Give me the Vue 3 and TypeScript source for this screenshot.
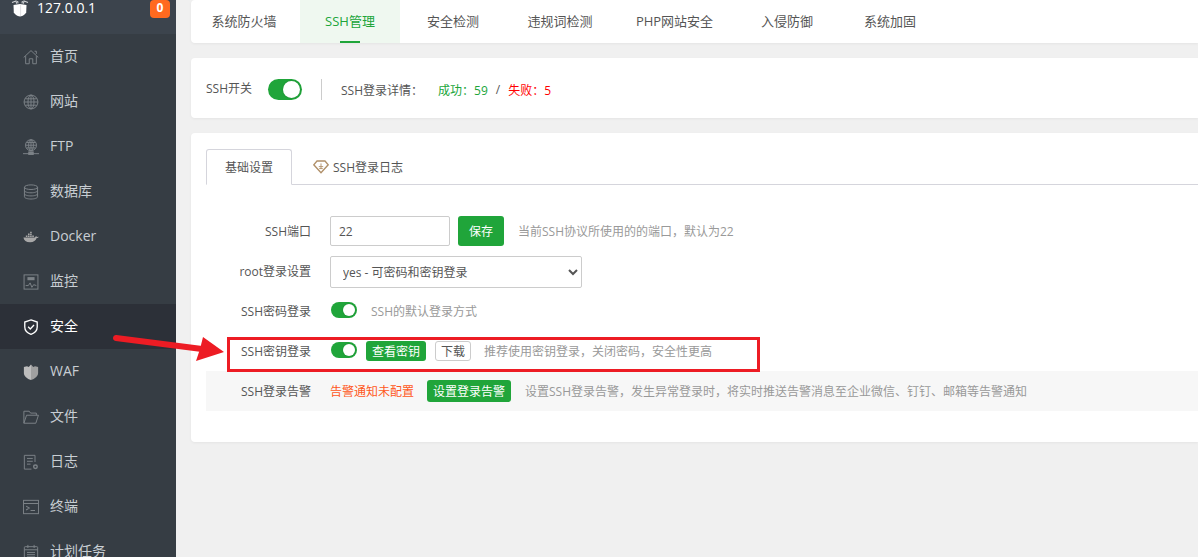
<template>
  <div class="page">
    <aside class="sidebar">
      <div class="brand">
        <svg class="logo" viewBox="0 0 18 18" width="18" height="18">
          <path d="M2.5 5 L9 4 L15.5 5 L15.2 12.5 Q13.8 15.4 9 16.6 Q4.2 15.4 2.8 12.5 Z" fill="#fff" />
          <path d="M1 2.6 L5 1 L5.6 3.6 M6.6 1 L7 3.4 M11.4 1 L11 3.4 M12.4 3.6 L13 1 L17 2.6" stroke="#cfd2d5" stroke-width="1.1" fill="none" />
          <path d="M9.6 4.5 V16" stroke="#d5d7da" stroke-width="0.8" />
        </svg>
        <span class="ip">127.0.0.1</span>
        <span class="badge">0</span>
      </div>
      <nav>
        <div v-for="item in menu" :key="item.name" class="nav-item" :class="{ active: item.active }">
          <svg class="nav-icon" viewBox="0 0 18 18" width="16" height="16" fill="none" stroke="currentColor" stroke-width="1.1">
            <g v-if="item.icon === 'home'">
              <path d="M0.8 9.5 L9 1.8 L17.2 9.5 M3 8 V16.6 H7 V11 H11 V16.6 H15 V8 M13 2.5 H15 V5.5" />
            </g>
            <g v-else-if="item.icon === 'globe'">
              <circle cx="9" cy="9" r="7.8" />
              <ellipse cx="9" cy="9" rx="3.4" ry="7.8" />
              <path d="M1.2 9 H16.8 M2.4 5.4 H15.6 M2.4 12.6 H15.6 M9 1.2 V16.8" />
            </g>
            <g v-else-if="item.icon === 'ftp'">
              <circle cx="9" cy="7" r="6.2" />
              <ellipse cx="9" cy="7" rx="2.7" ry="6.2" />
              <path d="M2.8 7 H15.2 M4 4 H14 M4 10 H14 M9 1 V13 M0 16.5 H18" />
              <rect x="6.5" y="14.5" width="5" height="3" fill="currentColor" />
            </g>
            <g v-else-if="item.icon === 'db'">
              <ellipse cx="9" cy="3.6" rx="7.4" ry="2.6" />
              <path d="M1.6 3.6 V14.4 C1.6 15.8 5 16.9 9 16.9 C13 16.9 16.4 15.8 16.4 14.4 V3.6 M1.6 7.4 C1.6 8.8 5 9.9 9 9.9 C13 9.9 16.4 8.8 16.4 7.4 M1.6 11 C1.6 12.4 5 13.4 9 13.4 C13 13.4 16.4 12.4 16.4 11" />
            </g>
            <g v-else-if="item.icon === 'docker'" class="docker" stroke="none">
              <path d="M0.5 9.6 H13.4 C14 8.6 14.2 8.4 14.6 8.2 C15.4 8.4 15.6 8.8 15.8 9 L17.8 8.8 C17.4 9.8 16.4 10.2 15.4 10.2 C14.4 13 12 15 8 15 C3.4 15 1 13 0.5 9.6 Z" />
              <path d="M3.2 7.4 H5 V9 H3.2 Z M5.6 7.4 H7.4 V9 H5.6 Z M8 7.4 H9.8 V9 H8 Z M10.4 7.4 H12.2 V9 H10.4 Z M5.6 5.2 H7.4 V6.8 H5.6 Z M8 5.2 H9.8 V6.8 H8 Z M8 3 H9.8 V4.6 H8 Z" />
            </g>
            <g v-else-if="item.icon === 'monitor'">
              <rect x="1.2" y="1" width="15.6" height="16" />
              <rect x="5" y="3.5" width="8" height="3.5" fill="currentColor" stroke="none" />
              <path d="M3 13 L6 13 L8 10 L10 15 L12 12 L15 13" />
            </g>
            <g v-else-if="item.icon === 'shield'">
              <path d="M9 1 L16 3.4 V9 C16 13 13 15.8 9 17.2 C5 15.8 2 13 2 9 V3.4 Z" stroke-width="1.5" />
              <path d="M5.8 8.8 L8.2 11.2 L12.4 6.8" stroke-width="1.5" />
            </g>
            <g v-else-if="item.icon === 'waf'" stroke="none">
              <path d="M1 3.5 L4.5 2.5 L6.5 3.4 L9 0.5 L9 18 C4.5 16.5 1 13.5 1 10 Z" fill="#bdbdbd" />
              <path d="M9 0.5 L11.5 3.4 L13.5 2.5 L17 3.5 V10 C17 13.5 13.5 16.5 9 18 Z" fill="#a0a0a0" />
            </g>
            <g v-else-if="item.icon === 'folder'">
              <path d="M1 16 V2.5 H7 L8.5 4.6 H15 V7 M1 16 H14.4 L17.4 7 H4 L1 16 Z" />
            </g>
            <g v-else-if="item.icon === 'log'">
              <path d="M13.5 9 V1.5 H1.5 V17 H9.5 M4.5 5 H11 M4.5 8.2 H11 M4.5 11.4 H8.5" />
              <circle cx="14" cy="14.4" r="2" stroke-width="1.6" />
            </g>
            <g v-else-if="item.icon === 'terminal'">
              <rect x="0.6" y="1.5" width="16.8" height="15" />
              <path d="M0.6 5 H17.4 M3.5 8 L7 10.2 L3.5 12.4 M8.5 13 H13.5" stroke-width="1.2" />
            </g>
            <g v-else>
              <rect x="1.5" y="3" width="15" height="14.5" rx="1" />
              <path d="M1.5 6.5 H16.5 M5.5 1 V4.5 M12.5 1 V4.5 M4.5 9.5 H13.5 M4.5 12 H13.5 M4.5 14.5 H13.5" />
            </g>
          </svg>
          <span class="nav-name">{{ item.name }}</span>
        </div>
      </nav>
    </aside>

    <main class="content">
      <div class="card top-tabs">
        <div
          v-for="tab in topTabs"
          :key="tab.name"
          class="top-tab"
          :class="{ current: tab.current }"
          :style="{ width: tab.width + 'px' }"
        >
          {{ tab.name }}
        </div>
      </div>

      <div class="card status">
        <span class="status-label">SSH开关</span>
        <span class="toggle big"></span>
        <span class="divider"></span>
        <div class="login-detail">
          <span class="detail">SSH登录详情：</span>
          <span class="ok">成功：59</span>
          <span class="slash">/</span>
          <span class="fail">失败：5</span>
        </div>
      </div>

      <div class="card settings">
        <div class="sub-tabs">
          <div class="sub-tab current">基础设置</div>
          <div class="sub-tab">
            <svg class="gem" viewBox="0 0 16 14" width="16" height="14" fill="none" stroke="#b08f68" stroke-width="1.3">
              <path d="M4 1 H12 L15.2 4.8 L8 12.8 L0.8 4.8 Z" />
              <path d="M5.8 6.6 H10.2 M8 3.4 V9 M6.2 8.6 H9.8" stroke-width="0.9" />
            </svg>
            SSH登录日志
          </div>
        </div>

        <div class="rows">
          <div class="row port-row">
            <label>SSH端口</label>
            <input class="port" value="22" />
            <button class="btn save">保存</button>
            <span class="hint">当前SSH协议所使用的的端口，默认为22</span>
          </div>
          <div class="row root-row">
            <label>root登录设置</label>
            <select class="root-select">
              <option>yes - 可密码和密钥登录</option>
            </select>
          </div>
          <div class="row switch-row">
            <label>SSH密码登录</label>
            <span class="toggle"></span>
            <span class="hint pw-hint">SSH的默认登录方式</span>
          </div>
          <div class="row key-row">
            <label>SSH密钥登录</label>
            <span class="toggle"></span>
            <button class="btn small view-key">查看密钥</button>
            <button class="btn small plain">下载</button>
            <span class="hint key-hint">推荐使用密钥登录，关闭密码，安全性更高</span>
          </div>
          <div class="row alarm-row">
            <label>SSH登录告警</label>
            <span class="alarm">告警通知未配置</span>
            <button class="btn small set-alarm">设置登录告警</button>
            <span class="hint">设置SSH登录告警，发生异常登录时，将实时推送告警消息至企业微信、钉钉、邮箱等告警通知</span>
          </div>
        </div>
      </div>
    </main>

    <div class="red-box"></div>
    <svg class="arrow" viewBox="0 0 120 30" width="120" height="30">
      <path d="M6 5 L92 16" stroke="#ed1c24" stroke-width="6" stroke-linecap="round" fill="none" />
      <path d="M93 4 L114 19 L86 28 L90 16 Z" fill="#ed1c24" />
    </svg>
  </div>
</template>

<script setup lang="ts">
interface MenuItem {
  name: string
  icon: string
  active?: boolean
}

const menu: MenuItem[] = [
  { name: '首页', icon: 'home' },
  { name: '网站', icon: 'globe' },
  { name: 'FTP', icon: 'ftp' },
  { name: '数据库', icon: 'db' },
  { name: 'Docker', icon: 'docker' },
  { name: '监控', icon: 'monitor' },
  { name: '安全', icon: 'shield', active: true },
  { name: 'WAF', icon: 'waf' },
  { name: '文件', icon: 'folder' },
  { name: '日志', icon: 'log' },
  { name: '终端', icon: 'terminal' },
  { name: '计划任务', icon: 'calendar' }
]

const topTabs = [
  { name: '系统防火墙', width: 109 },
  { name: 'SSH管理', width: 100, current: true },
  { name: '安全检测', width: 106 },
  { name: '违规词检测', width: 108 },
  { name: 'PHP网站安全', width: 121 },
  { name: '入侵防御', width: 104 },
  { name: '系统加固', width: 102 }
]
</script>

<style>
html,
body {
  margin: 0;
  overflow: hidden;
}
</style>

<style scoped>
.page {
  position: relative;
  display: flex;
  height: 557px;
  overflow: hidden;
  background: #f0f0f0;
  font-family: "Open Sans", "Noto Sans CJK SC", sans-serif;
  font-size: 12px;
  color: #555;
}

.sidebar {
  width: 176px;
  flex: none;
  background: #363d44;
}

.brand {
  display: flex;
  align-items: flex-start;
  height: 34px;
  padding: 0 6px 0 11px;
  background: #3c444d;
  color: #fff;
  box-sizing: border-box;
}

.logo {
  flex: none;
}

.ip {
  margin-left: 8px;
  padding-top: 1px;
  font-size: 14px;
  line-height: 14px;
  flex: 1;
}

.badge {
  width: 20px;
  height: 18px;
  border-radius: 4px;
  background: #ff6a1f;
  font-size: 12px;
  font-weight: 700;
  line-height: 16px;
  text-align: center;
}

.nav-item {
  display: flex;
  align-items: center;
  height: 45px;
  padding-left: 23px;
  font-size: 14px;
  color: #c8ced3;
  box-sizing: border-box;
}

.nav-icon {
  flex: none;
  margin-right: 11px;
  color: #7c8287;
}

.nav-name {
  margin-bottom: 3px;
}

.docker {
  fill: #a8a8a8;
}

.nav-item.active {
  background: #2c3038;
  color: #fff;
}

.nav-item.active .nav-icon {
  color: #fff;
}

.content {
  flex: 1;
  min-width: 0;
  padding-left: 15px;
}

.card {
  background: #fff;
  border-radius: 4px 0 0 4px;
  box-shadow: 0 1px 3px rgba(0, 0, 0, 0.05);
}

.top-tabs {
  display: flex;
  height: 43px;
  margin-bottom: 15px;
}

.top-tab {
  position: relative;
  flex: none;
  box-sizing: border-box;
  font-size: 13px;
  line-height: 43px;
  text-align: center;
  color: #555;
}

.top-tab:first-child {
  padding-right: 3px;
}

.top-tab.current {
  background: #eff8f0;
  color: #20a53a;
}

.top-tab.current::after {
  content: "";
  position: absolute;
  left: 40px;
  bottom: 0;
  width: 20px;
  height: 2px;
  background: #20a53a;
}

.status {
  display: flex;
  align-items: center;
  height: 60px;
  margin-bottom: 15px;
  padding-left: 15px;
}

.toggle {
  position: relative;
  display: inline-block;
  flex: none;
  width: 26px;
  height: 16px;
  border-radius: 8px;
  background: #20a53a;
}

.toggle::after {
  content: "";
  position: absolute;
  top: 2px;
  right: 2px;
  width: 12px;
  height: 12px;
  border-radius: 50%;
  background: #fff;
  box-shadow: 0 0 2px rgba(0, 0, 0, 0.2);
}

.toggle.big {
  width: 34px;
  height: 21px;
  margin: 2px 0 0 16px;
  border-radius: 11px;
}

.toggle.big::after {
  top: 2px;
  width: 17px;
  height: 17px;
}

.divider {
  width: 1px;
  height: 21px;
  margin: 2px 19px 0;
  background: #ccc;
}

.login-detail {
  display: flex;
  margin-top: 4px;
}

.detail {
  margin-right: 15px;
}

.ok {
  color: #20a53a;
}

.slash {
  margin: 0 8px;
}

.fail {
  color: #ff0000;
}

.settings {
  height: 309px;
  padding: 16px 0 0 15px;
  box-sizing: border-box;
}

.sub-tabs {
  display: flex;
  height: 36px;
  border-bottom: 1px solid #d5d5dc;
  box-sizing: border-box;
}

.sub-tab {
  display: flex;
  align-items: center;
  gap: 4px;
  height: 36px;
  padding: 0 21px;
  box-sizing: border-box;
  color: #555;
}

.sub-tab.current {
  border: 1px solid #d5d5dc;
  border-bottom-color: #fff;
  border-radius: 3px 3px 0 0;
  padding: 0 18px;
  width: 86px;
}

.rows {
  margin-top: 31px;
}

.row {
  display: flex;
  align-items: center;
}

.row label {
  flex: none;
  width: 105px;
  margin-right: 19px;
  text-align: right;
  color: #555;
}

.port-row {
  height: 30px;
  margin-bottom: 10px;
}

.port {
  width: 120px;
  height: 30px;
  padding: 0 8px;
  border: 1px solid #ccc;
  border-radius: 2px;
  box-sizing: border-box;
  font: inherit;
  color: #555;
  outline: none;
}

.btn {
  border: 0;
  border-radius: 3px;
  background: #20a53a;
  color: #fff;
  font: inherit;
  padding: 0;
}

.save {
  width: 46px;
  height: 30px;
  margin: 0 14px 0 8px;
}

.hint {
  color: #999;
}

.root-row {
  height: 32px;
  margin-bottom: 7px;
}

.root-row label {
  margin-bottom: 2px;
}

.root-select {
  width: 252px;
  height: 32px;
  padding-left: 8px;
  border: 1px solid #ccc;
  border-radius: 2px;
  background: #fff;
  font: inherit;
  color: #555;
  outline: none;
}

.switch-row {
  height: 30px;
  margin-bottom: 10px;
}

.switch-row .toggle,
.key-row .toggle {
  margin-left: 1px;
}

.switch-row label,
.key-row label,
.switch-row .hint,
.key-row .hint {
  padding-top: 2px;
}

.pw-hint {
  margin-left: 14px;
}

.key-row {
  height: 30px;
  margin-bottom: 6px;
}

.small {
  height: 20px;
}

.view-key {
  width: 60px;
  margin: 1px 0 0 9px;
}

.plain {
  width: 36px;
  margin: 1px 0 0 9px;
  border: 1px solid #ccc;
  background: #fff;
  color: #555;
}

.key-hint {
  margin-left: 13px;
}

.alarm-row {
  height: 40px;
  background: #f7f7f7;
}

.alarm {
  width: 97px;
  color: #ff5722;
}

.set-alarm {
  width: 84px;
  height: 22px;
  margin-right: 14px;
}

.red-box {
  position: absolute;
  left: 227px;
  top: 337px;
  width: 533px;
  height: 35px;
  border: 3px solid #ed1c24;
  box-sizing: border-box;
  pointer-events: none;
}

.arrow {
  position: absolute;
  left: 110px;
  top: 333px;
  pointer-events: none;
}
</style>
